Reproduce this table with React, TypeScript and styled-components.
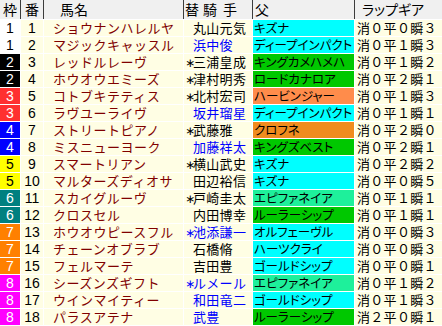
import React from 'react'
import styled, { createGlobalStyle } from 'styled-components'

type Sire = 'cyan' | 'green' | 'salmon' | 'orange' | 'sea'

interface Horse {
    waku: number;
    num: number;
    name: string;
    jockey: string;
    mark: boolean;
    change: boolean;
    sire: string;
    sireColor: Sire;
    lap: string;
}

const horses: Horse[] = [
    { waku: 1, num: 1, name: 'ショウナンハレルヤ', jockey: '丸山元気', mark: false, change: false, sire: 'キズナ', sireColor: 'cyan', lap: '消０平０瞬３' },
    { waku: 1, num: 2, name: 'マジックキャッスル', jockey: '浜中俊', mark: false, change: true, sire: 'ディープインパクト', sireColor: 'cyan', lap: '消０平１瞬３' },
    { waku: 2, num: 3, name: 'レッドルレーヴ', jockey: '三浦皇成', mark: true, change: false, sire: 'キングカメハメハ', sireColor: 'green', lap: '消０平１瞬２' },
    { waku: 2, num: 4, name: 'ホウオウエミーズ', jockey: '津村明秀', mark: true, change: false, sire: 'ロードカナロア', sireColor: 'green', lap: '消０平２瞬１' },
    { waku: 3, num: 5, name: 'コトブキテティス', jockey: '北村宏司', mark: true, change: false, sire: 'ハービンジャー', sireColor: 'salmon', lap: '消０平１瞬３' },
    { waku: 3, num: 6, name: 'ラヴユーライヴ', jockey: '坂井瑠星', mark: false, change: true, sire: 'ディープインパクト', sireColor: 'cyan', lap: '消０平１瞬１' },
    { waku: 4, num: 7, name: 'ストリートピアノ', jockey: '武藤雅', mark: true, change: false, sire: 'クロフネ', sireColor: 'orange', lap: '消０平２瞬０' },
    { waku: 4, num: 8, name: 'ミスニューヨーク', jockey: '加藤祥太', mark: false, change: true, sire: 'キングズベスト', sireColor: 'green', lap: '消０平２瞬１' },
    { waku: 5, num: 9, name: 'スマートリアン', jockey: '横山武史', mark: true, change: false, sire: 'キズナ', sireColor: 'cyan', lap: '消０平２瞬２' },
    { waku: 5, num: 10, name: 'マルターズディオサ', jockey: '田辺裕信', mark: false, change: false, sire: 'キズナ', sireColor: 'cyan', lap: '消０平０瞬５' },
    { waku: 6, num: 11, name: 'スカイグルーヴ', jockey: '戸崎圭太', mark: true, change: false, sire: 'エピファネイア', sireColor: 'sea', lap: '消０平１瞬１' },
    { waku: 6, num: 12, name: 'クロスセル', jockey: '内田博幸', mark: false, change: false, sire: 'ルーラーシップ', sireColor: 'green', lap: '消０平１瞬１' },
    { waku: 7, num: 13, name: 'ホウオウピースフル', jockey: '池添謙一', mark: true, change: true, sire: 'オルフェーヴル', sireColor: 'cyan', lap: '消０平０瞬３' },
    { waku: 7, num: 14, name: 'チェーンオブラブ', jockey: '石橋脩', mark: false, change: false, sire: 'ハーツクライ', sireColor: 'cyan', lap: '消０平０瞬３' },
    { waku: 7, num: 15, name: 'フェルマーテ', jockey: '吉田豊', mark: false, change: false, sire: 'ゴールドシップ', sireColor: 'cyan', lap: '消０平０瞬１' },
    { waku: 8, num: 16, name: 'シーズンズギフト', jockey: 'ルメール', mark: true, change: true, sire: 'エピファネイア', sireColor: 'sea', lap: '消０平１瞬２' },
    { waku: 8, num: 17, name: 'ウインマイティー', jockey: '和田竜二', mark: false, change: true, sire: 'ゴールドシップ', sireColor: 'cyan', lap: '消０平１瞬３' },
    { waku: 8, num: 18, name: 'パラスアテナ', jockey: '武豊', mark: false, change: true, sire: 'ルーラーシップ', sireColor: 'green', lap: '消２平０瞬１' },
]

const wakuColors: Record<number, [string, string]> = {
    1: ['#ffffff', '#000000'],
    2: ['#000000', '#ffffff'],
    3: ['#ff3030', '#ffffff'],
    4: ['#0000ff', '#ffffff'],
    5: ['#ffff00', '#000000'],
    6: ['#008080', '#ffffff'],
    7: ['#ff8000', '#ffffff'],
    8: ['#ff00ff', '#ffffff'],
}

const sireColors: Record<Sire, string> = {
    cyan: '#00ffff',
    green: '#00c800',
    salmon: '#ff8c4b',
    orange: '#f08c1e',
    sea: '#1ef09b',
}

const App = () => {
    return (
        <React.Fragment>
            <GlobalStyle />
            <Sheet>
                <HeadRow>
                    <HeadCell $align="center">枠</HeadCell>
                    <HeadCell $align="center">番</HeadCell>
                    <HeadCell $indent={16}>馬名</HeadCell>
                    <HeadCell $indent={1}>替<Spaced>騎手</Spaced></HeadCell>
                    <HeadCell $indent={2}>父</HeadCell>
                    <HeadCell $indent={7}>ラップギア</HeadCell>
                </HeadRow>
                {horses.map((h) => (
                    <Row key={h.num}>
                        <WakuCell $bg={wakuColors[h.waku][0]} $fg={wakuColors[h.waku][1]}>
                            {h.waku}
                        </WakuCell>
                        <NumCell>{h.num}</NumCell>
                        <NameCell>{h.name}</NameCell>
                        <JockeyCell $change={h.change}>
                            <Mark>{h.mark ? '∗' : ''}</Mark>
                            {h.jockey}
                        </JockeyCell>
                        <SireCell $bg={sireColors[h.sireColor]}>{h.sire}</SireCell>
                        <LapCell>{h.lap}</LapCell>
                    </Row>
                ))}
            </Sheet>
        </React.Fragment>
    )
}

export default App

const GlobalStyle = createGlobalStyle`
    body {
        margin: 0;
        background: #ffffff;
        font-family: 'Noto Sans CJK JP', 'DejaVu Sans', sans-serif;
    }
`

const Sheet = styled.div`
    width: 442px;
    height: 326px;
    display: flex;
    flex-direction: column;
    gap: 1px;
    background: #ffffff;
    overflow: hidden;
`

const HeadRow = styled.div`
    display: grid;
    grid-template-columns: 20px 23px 140px 69px 102px 88px;
    height: 19px;
    background: #f0f0f0;
`

const HeadCell = styled.div<{ $align?: string; $indent?: number }>`
    box-sizing: border-box;
    height: 19px;
    padding-left: ${(p) => p.$indent || 0}px;
    text-align: ${(p) => p.$align || 'left'};
    font-size: 14px;
    line-height: 19px;
    color: #000000;
    white-space: nowrap;
    overflow: hidden;
    font-feature-settings: 'palt';
    & + & {
        border-left: 1px solid #3c3c3c;
    }
`

const Spaced = styled.span`
    margin-left: 4px;
    letter-spacing: 6px;
`

const Row = styled.div`
    display: grid;
    grid-template-columns: 20px 22px 139px 68px 101px 87px;
    column-gap: 1px;
    height: 16px;
`

const Cell = styled.div`
    height: 16px;
    line-height: 16px;
    font-size: 13px;
    white-space: nowrap;
    overflow: hidden;
    background: #fffee4;
`

const WakuCell = styled(Cell)<{ $bg: string; $fg: string }>`
    background: ${(p) => p.$bg};
    color: ${(p) => p.$fg};
    text-align: center;
    font-family: 'Liberation Sans', sans-serif;
    font-size: 14px;
`

const NumCell = styled(Cell)`
    text-align: center;
    font-family: 'Liberation Sans', sans-serif;
    font-size: 14px;
    color: #000000;
`

const NameCell = styled(Cell)`
    padding-left: 9px;
    color: #800000;
    letter-spacing: 0.5px;
`

const JockeyCell = styled(Cell)<{ $change: boolean }>`
    padding-left: 1px;
    color: ${(p) => (p.$change ? '#0000ff' : '#000000')};
    letter-spacing: 0.3px;
`

const Mark = styled.span`
    display: inline-block;
    width: 8px;
    font-family: 'DejaVu Sans', sans-serif;
    font-size: 12px;
    letter-spacing: 0;
`

const SireCell = styled(Cell)<{ $bg: string }>`
    background: ${(p) => p.$bg};
    padding-left: 1px;
    font-size: 12.5px;
    color: #000000;
    font-feature-settings: 'palt';
`

const LapCell = styled(Cell)`
    padding-left: 2px;
    color: #000000;
    letter-spacing: 0.3px;
`
